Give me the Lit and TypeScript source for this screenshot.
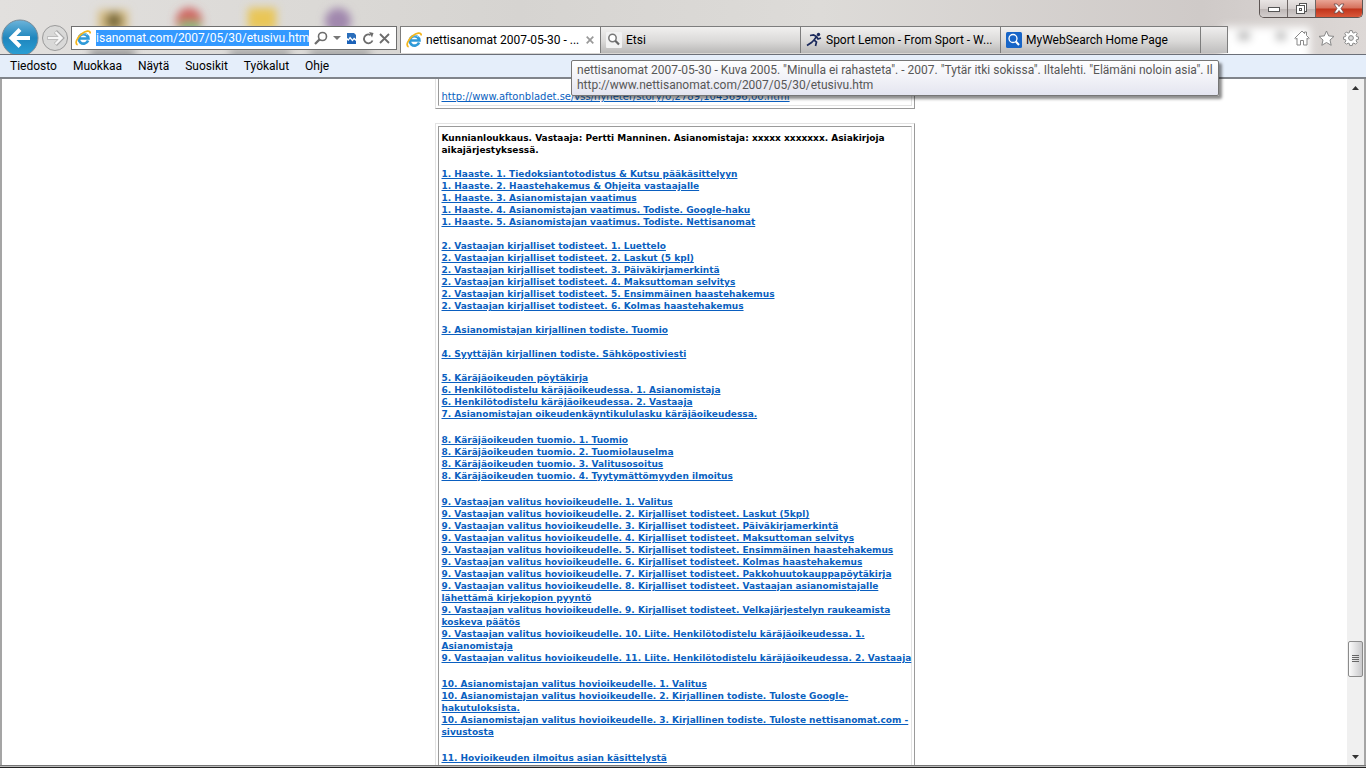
import { LitElement, html, css, svg } from "lit";
import { customElement, query } from "lit/decorators.js";

interface Group { items: string[]; wide?: boolean }

const GROUPS: Group[] = [
  { items: [
    "1. Haaste. 1. Tiedoksiantotodistus & Kutsu pääkäsittelyyn",
    "1. Haaste. 2. Haastehakemus & Ohjeita vastaajalle",
    "1. Haaste. 3. Asianomistajan vaatimus",
    "1. Haaste. 4. Asianomistajan vaatimus. Todiste. Google-haku",
    "1. Haaste. 5. Asianomistajan vaatimus. Todiste. Nettisanomat",
  ] },
  { items: [
    "2. Vastaajan kirjalliset todisteet. 1. Luettelo",
    "2. Vastaajan kirjalliset todisteet. 2. Laskut (5 kpl)",
    "2. Vastaajan kirjalliset todisteet. 3. Päiväkirjamerkintä",
    "2. Vastaajan kirjalliset todisteet. 4. Maksuttoman selvitys",
    "2. Vastaajan kirjalliset todisteet. 5. Ensimmäinen haastehakemus",
    "2. Vastaajan kirjalliset todisteet. 6. Kolmas haastehakemus",
  ] },
  { items: ["3. Asianomistajan kirjallinen todiste. Tuomio"] },
  { items: ["4. Syyttäjän kirjallinen todiste. Sähköpostiviesti"] },
  { wide: true, items: [
    "5. Käräjäoikeuden pöytäkirja",
    "6. Henkilötodistelu käräjäoikeudessa. 1. Asianomistaja",
    "6. Henkilötodistelu käräjäoikeudessa. 2. Vastaaja",
    "7. Asianomistajan oikeudenkäyntikululasku käräjäoikeudessa.",
  ] },
  { wide: true, items: [
    "8. Käräjäoikeuden tuomio. 1. Tuomio",
    "8. Käräjäoikeuden tuomio. 2. Tuomiolauselma",
    "8. Käräjäoikeuden tuomio. 3. Valitusosoitus",
    "8. Käräjäoikeuden tuomio. 4. Tyytymättömyyden ilmoitus",
  ] },
  { wide: true, items: [
    "9. Vastaajan valitus hovioikeudelle. 1. Valitus",
    "9. Vastaajan valitus hovioikeudelle. 2. Kirjalliset todisteet. Laskut (5kpl)",
    "9. Vastaajan valitus hovioikeudelle. 3. Kirjalliset todisteet. Päiväkirjamerkintä",
    "9. Vastaajan valitus hovioikeudelle. 4. Kirjalliset todisteet. Maksuttoman selvitys",
    "9. Vastaajan valitus hovioikeudelle. 5. Kirjalliset todisteet. Ensimmäinen haastehakemus",
    "9. Vastaajan valitus hovioikeudelle. 6. Kirjalliset todisteet. Kolmas haastehakemus",
    "9. Vastaajan valitus hovioikeudelle. 7. Kirjalliset todisteet. Pakkohuutokauppapöytäkirja",
    "9. Vastaajan valitus hovioikeudelle. 8. Kirjalliset todisteet. Vastaajan asianomistajalle\nlähettämä kirjekopion pyyntö",
    "9. Vastaajan valitus hovioikeudelle. 9. Kirjalliset todisteet. Velkajärjestelyn raukeamista\nkoskeva päätös",
    "9. Vastaajan valitus hovioikeudelle. 10. Liite. Henkilötodistelu käräjäoikeudessa. 1.\nAsianomistaja",
    "9. Vastaajan valitus hovioikeudelle. 11. Liite. Henkilötodistelu käräjäoikeudessa. 2. Vastaaja",
  ] },
  { wide: true, items: [
    "10. Asianomistajan valitus hovioikeudelle. 1. Valitus",
    "10. Asianomistajan valitus hovioikeudelle. 2. Kirjallinen todiste. Tuloste Google-\nhakutuloksista.",
    "10. Asianomistajan valitus hovioikeudelle. 3. Kirjallinen todiste. Tuloste nettisanomat.com -\nsivustosta",
  ] },
  { items: ["11. Hovioikeuden ilmoitus asian käsittelystä"] },
];

const MENU = ["Tiedosto", "Muokkaa", "Näytä", "Suosikit", "Työkalut", "Ohje"];

const ieLogo = () => svg`<svg class="ico" viewBox="0 0 16 16" aria-hidden="true">
  <path d="M13.100 10.600A4.800 4.800 0 1 1 13.400 8.500H5" fill="none" stroke="#2f9ad8" stroke-width="2.700"/>
  <path d="M12.300 5A5 5 0 0 0 4.300 6.500" fill="none" stroke="#8fd3f3" stroke-width="1"/>
  <path d="M2.600 14.900C-.6 13.600 2 7.400 6.500 4 10.300 1 15.300-.4 15.200 3.400" fill="none" stroke="#f3b51d" stroke-width="1.700"/>
</svg>`;

@customElement("app-root")
export class AppRoot extends LitElement {
  @query(".addr input") private address!: HTMLInputElement;

  static styles = css`
    :host {
      display: flex; flex-direction: column; height: 100vh; overflow: hidden; position: relative;
      background: #fff; color: #000; box-sizing: border-box;
      font: 12px/16px Roboto, "Noto Sans", sans-serif;
    }
    * { box-sizing: border-box; }
    button { font: inherit; color: inherit; border: 0; background: none; padding: 0; margin: 0; }
    svg { display: block; flex: none; }
    .ico { width: 16px; height: 16px; }
    .glass {
      flex: none; position: relative; overflow: hidden;
      background: linear-gradient(90deg, #e2e0de, #dcdad7 20%, #d6d4d1 38%, #dddbd8 60%, #cfcac8 88%, #ddd8d6);
      border-bottom: 1px solid #6b6f78;
    }
    .blur { position: absolute; inset: 0; width: 100%; height: 100%; }
    .title { position: relative; height: 26px; display: flex; justify-content: flex-end; align-items: flex-start; padding-right: 3px; }
    .winctl { display: flex; height: 18px; border: 1px solid #5d5553; border-top: 0; border-radius: 0 0 5px 5px; overflow: hidden; }
    .winctl button {
      width: 28px; display: flex; align-items: center; justify-content: center;
      background: linear-gradient(#e9e5e4, #d6d0cf 50%, #bdb6b5 52%, #d4cfce); border-right: 1px solid #6e6664;
    }
    .winctl .close { width: 46px; border-right: 0; background: linear-gradient(#e9a595, #d5705b 48%, #c0331a 52%, #d9583a); }
    .nav { position: relative; height: 28px; display: flex; align-items: flex-start; }
    .hist { width: 71px; height: 28px; flex: none; }
    .hist-btns { position: absolute; left: 0; top: -8px; display: flex; align-items: center; }
    .addr {
      flex: none; width: 326px; height: 24px; border: 1px solid #6f6f6f; background: #fff;
      display: flex; align-items: center; padding: 0 6px 0 3px;
    }
    .addr input {
      width: 213px; height: 16px; margin-left: 5px; padding: 0; border: 0; outline: 0; border-radius: 0;
      background: #3399ff; color: #fff; font: inherit; line-height: 16px;
    }
    .addr button { display: flex; }
    .tools { flex: 1; display: flex; align-items: center; justify-content: space-between; padding-left: 5px; }
    .tabs { display: flex; flex: 1; min-width: 0; margin-left: 3px; height: 27px; }
    .tab {
      flex: none; width: 200px; display: flex; align-items: center; gap: 4px; padding: 0 6px 0 5px; white-space: nowrap;
      border: 1px solid #7d7d7d; border-width: 1px 0 0 1px; text-align: left;
      background: linear-gradient(#f1f0ef, #dad9d8 55%, #b9b8b7);
    }
    .tab span { flex: 1; }
    .tab.active { background: #fff; }
    .newtab { width: 28px; border: 1px solid #7d7d7d; border-bottom: 0; background: linear-gradient(#efeeee, #d6d5d4 55%, #bfbebe); }
    .right { display: flex; gap: 8px; align-items: center; height: 24px; padding-right: 7px; }
    .menu { flex: none; display: flex; gap: 16px; height: 24px; padding: 0 10px; align-items: center; background: #e5eefa; border-bottom: 2px solid #80848a; }
    .body { flex: 1; min-height: 0; display: flex; border: 1px solid #a5a5a5; border-width: 0 2px 0 2px; }
    .view { flex: 1; min-width: 0; overflow: hidden; display: flex; flex-direction: column; align-items: center; gap: 14px; }
    .card { flex: none; width: 480px; padding: 2px; border: 1px solid; border-color: #e3e3e3 #9a9a9a #9a9a9a #e3e3e3; }
    .cell {
      border: 1px solid; border-color: #9a9a9a #e3e3e3 #e3e3e3 #9a9a9a; padding: 5px 3px;
      font: bold 9px/12px "DejaVu Sans", Verdana, sans-serif; white-space: pre;
    }
    .first { border-top: 0; padding-top: 0; }
    .first .cell { border-top: 0; padding: 12px 3px 2px; font-weight: 400; font-size: 10px; }
    a { color: #0a5fc0; text-decoration: underline; }
    .cell p { margin: 0 0 12px; }
    .group { list-style: none; margin: 0 0 12px; padding: 0; }
    .group.wide { margin-bottom: 14px; }
    .scroll { flex: none; width: 17px; background: #f0f0f0; display: grid; grid-template-rows: 17px 545px 36px 1fr 17px; justify-items: center; align-items: center; }
    .thumb { grid-row: 3; width: 15px; height: 36px; border: 1px solid #8b8b8b; border-radius: 2px; background: linear-gradient(90deg, #fbfbfb, #c9c9cb); display: flex; align-items: center; justify-content: center; }
    .down { grid-row: 5; }
    .edge { flex: none; height: 3px; background: linear-gradient(#777 1px, #bbb 1px 2px, #222 2px); }
    .tip {
      position: absolute; left: 571px; top: 60px; padding: 2px 5px; line-height: 15px;
      white-space: nowrap; color: #575757; border: 1px solid #767676; border-radius: 2px;
      background: linear-gradient(#fff, #e4e5f0); box-shadow: 3px 3px 3px rgba(0, 0, 0, .45);
    }
  `;

  // Keep the end of a long address in view.
  firstUpdated() {
    const toEnd = () => { this.address.scrollLeft = this.address.scrollWidth; };
    toEnd();
    requestAnimationFrame(toEnd);
  }

  render() {
    return html`
      <header class="glass">
        <svg class="blur" aria-hidden="true">
          <defs><filter id="b" x="-50%" y="-50%" width="200%" height="200%"><feGaussianBlur stdDeviation="4"/></filter></defs>
          <g filter="url(#b)">
            <rect x="98" y="10" width="30" height="24" fill="#d8bf86"/><circle cx="114" cy="21" r="9" fill="#7d6d3c"/>
            <circle cx="189" cy="21" r="13" fill="#cf6461"/><rect x="180" y="21" width="20" height="12" fill="#8db880"/>
            <rect x="248" y="8" width="28" height="22" fill="#e9c656"/>
            <circle cx="338" cy="21" r="13" fill="#a087ad"/>
            <rect x="90" y="50" width="45" height="8" fill="#888"/><rect x="230" y="50" width="60" height="8" fill="#999"/><rect x="310" y="50" width="60" height="8" fill="#999"/>
            <rect x="1222" y="27" width="88" height="40" fill="#fff"/><rect x="1238" y="32" width="12" height="8" fill="#aaa"/><rect x="1276" y="32" width="10" height="8" fill="#aaa"/>
          </g>
        </svg>
        <div class="title">
          <div class="winctl">
            <button aria-label="Pienennä"><svg width="14" height="8" viewBox="0 0 14 8"><rect x="1.500" y="2.500" width="11" height="4" fill="#fff" stroke="#555"/></svg></button>
            <button aria-label="Palauta"><svg width="13" height="13" viewBox="0 0 13 13"><g fill="#fff" stroke="#555"><rect x="4.500" y="1.500" width="7" height="8"/><rect x="1.500" y="3.500" width="8" height="8"/><rect x="4.500" y="6.500" width="2" height="2"/></g></svg></button>
            <button class="close" aria-label="Sulje"><svg width="12" height="11" viewBox="0 0 12 11"><path d="M1 1h3l2 2.500L8 1h3L8 5.500 11 10H8L6 7.500 4 10H1L4 5.500z" fill="#fff" stroke="#6b4a4a" stroke-width=".8"/></svg></button>
          </div>
        </div>
        <div class="nav">
          <div class="hist">
            <div class="hist-btns">
              <button aria-label="Takaisin"><svg width="40" height="38" viewBox="0 0 40 38">
                <defs><linearGradient id="bk" x2="0" y2="1"><stop stop-color="#6db4da"/><stop offset=".5" stop-color="#1f86bd"/><stop offset="1" stop-color="#2ba1d6"/></linearGradient></defs>
                <circle cx="20" cy="20" r="18" fill="url(#bk)" stroke="#7b8c98"/>
                <path d="M30 20H12M20 11.500 11.500 20 20 28.500" fill="none" stroke="#fff" stroke-width="4"/></svg></button>
              <button aria-label="Eteenpäin"><svg width="30" height="38" viewBox="0 0 30 38">
                <circle cx="15" cy="20" r="12.500" fill="#d9d9d8" stroke="#9a9a9a"/>
                <path d="M7.500 20H21M15.500 13.500 22 20 15.500 26.500" fill="none" stroke="#a8a8a8" stroke-width="4"/>
                <path d="M8 20H21M15.500 14 21.500 20 15.500 26" fill="none" stroke="#f6f6f6" stroke-width="2.400"/></svg></button>
            </div>
          </div>
          <div class="addr">
            ${ieLogo()}
            <input aria-label="Osoite" value="http://www.nettisanomat.com/2007/05/30/etusivu.htm">
            <div class="tools">
              <button aria-label="Haku"><svg width="14" height="14" viewBox="0 0 14 14"><circle cx="8.500" cy="5.500" r="4" fill="none" stroke="#6d6d6d" stroke-width="1.600"/><path d="M5.600 8.400 1 13" stroke="#6d6d6d" stroke-width="2.200"/></svg></button>
              <button aria-label="Näytä osoitteet"><svg width="8" height="4" viewBox="0 0 8 4"><path d="M0 0h8L4 4z" fill="#777"/></svg></button>
              <button aria-label="Yhteensopivuusnäkymä"><svg width="11" height="13" viewBox="0 0 11 13"><path d="M1 1h7l2 2v4L8 5.500 6.500 7.500 4 4.500 2.500 7 1 6z" fill="#2a6ebb"/><path d="M1 12V8l1.500 1L4 6.800 6.500 9.500 8 7.500 10 9v3z" fill="#1c62b8"/></svg></button>
              <button aria-label="Päivitä"><svg width="12" height="13" viewBox="0 0 12 13"><path d="M10.500 8.500A4.400 4.400 0 1 1 8.500 3" fill="none" stroke="#6d6d6d" stroke-width="1.800"/><path d="M7 0l4.500 1L10 5.500z" fill="#6d6d6d"/></svg></button>
              <button aria-label="Pysäytä"><svg width="11" height="11" viewBox="0 0 11 11"><path d="M1 1l9 9M10 1l-9 9" stroke="#6d6d6d" stroke-width="1.800"/></svg></button>
            </div>
          </div>
          <div class="tabs" role="tablist">
            <button class="tab active" role="tab" aria-selected="true">${ieLogo()}<span>nettisanomat 2007-05-30 - ...</span>
              <svg width="8" height="8" viewBox="0 0 8 8"><path d="M.7.700l6.600 6.600M7.300.7.700 7.300" stroke="#999" stroke-width="1.700"/></svg></button>
            <button class="tab" role="tab"><svg class="ico" viewBox="0 0 16 16"><rect width="16" height="16" rx="1" fill="#f2f2f2"/><circle cx="6.500" cy="6" r="3.700" fill="#fff" stroke="#777" stroke-width="1.500"/><path d="M9.300 8.800 13 12.500" stroke="#666" stroke-width="2.200"/></svg><span>Etsi</span></button>
            <button class="tab" role="tab"><svg class="ico" viewBox="0 0 16 16"><circle cx="12.500" cy="2.500" r="1.700" fill="#1b2a5c"/><path d="M4 3.500 7.500 3 10.500 4.500 8 8 10.500 10 9.500 14M8 8 5.500 10.500 1 13.500M10.500 4.500 12 7 15 6" fill="none" stroke="#1b2a5c" stroke-width="1.700"/></svg><span>Sport Lemon - From Sport - W...</span></button>
            <button class="tab" role="tab"><svg class="ico" viewBox="0 0 16 16"><rect width="16" height="16" rx="1.500" fill="#1765c7"/><circle cx="7" cy="6.500" r="4" fill="none" stroke="#fff" stroke-width="1.300"/><path d="M9.800 9.500 13 13" stroke="#fff" stroke-width="2"/></svg><span>MyWebSearch Home Page</span></button>
            <button class="newtab" aria-label="Uusi välilehti"></button>
          </div>
          <div class="right">
            <button aria-label="Koti"><svg width="16" height="16" viewBox="0 0 16 16"><path d="M8 1 .8 8.200l1 1L3 8.200V15h3.500v-4.500h3V15H13V8.200l1.200 1 1-1L12.500 5.500V2h-2v1.500z" fill="#fff" stroke="#888"/></svg></button>
            <button aria-label="Suosikit"><svg width="17" height="16" viewBox="0 0 17 16"><path d="M8.500 1l2.200 4.900 5.300.5-4 3.600 1.200 5.300-4.700-2.800-4.700 2.800L5 10 1 6.400l5.300-.5z" fill="#fff" stroke="#888"/></svg></button>
            <button aria-label="Työkalut"><svg width="16" height="16" viewBox="0 0 16 16"><path d="M6.800.6h2.400l.4 2 1.300.5 1.700-1.100 1.600 1.600-1.100 1.700.5 1.300 2 .4v2.200l-2 .4-.5 1.300 1.100 1.700-1.600 1.600-1.700-1.100-1.300.5-.4 2H6.800l-.4-2-1.300-.5-1.700 1.100-1.600-1.600 1.100-1.700-.5-1.300-2-.4V7l2-.4.5-1.300-1.100-1.700 1.600-1.600 1.700 1.100 1.300-.5z" fill="#fff" stroke="#888"/><circle cx="8" cy="8" r="2.400" fill="#ddd" stroke="#888"/></svg></button>
          </div>
        </div>
      </header>
      <nav class="menu">${MENU.map((m) => html`<button>${m}</button>`)}</nav>
      <div class="body">
        <main class="view">
          <section class="card first"><div class="cell"><a href="#">http://www.aftonbladet.se/vss/nyheter/story/0,2789,1045696,00.html</a></div></section>
          <section class="card"><div class="cell"><p>Kunnianloukkaus. Vastaaja: Pertti Manninen. Asianomistaja: xxxxx xxxxxxx. Asiakirjoja
aikajärjestyksessä.</p>${GROUPS.map((g) => html`<ul class="group ${g.wide ? "wide" : ""}">${g.items.map((t) => html`<li><a href="#">${t}</a></li>`)}</ul>`)}</div></section>
        </main>
        <div class="scroll" aria-hidden="true">
          <svg width="7" height="4" viewBox="0 0 7 4"><path d="M0 4h7L3.500 0z" fill="#333"/></svg>
          <div class="thumb"><svg width="7" height="8" viewBox="0 0 7 8"><path d="M0 .5h7M0 2.500h7M0 4.500h7M0 6.500h7" stroke="#666"/></svg></div>
          <svg class="down" width="7" height="4" viewBox="0 0 7 4"><path d="M0 0h7L3.500 4z" fill="#333"/></svg>
        </div>
      </div>
      <div class="edge"></div>
      <div class="tip" role="tooltip">nettisanomat 2007-05-30 - Kuva 2005. "Minulla ei rahasteta". - 2007. "Tytär itki sokissa". Iltalehti. "Elämäni noloin asia". Il<br>http://www.nettisanomat.com/2007/05/30/etusivu.htm</div>
    `;
  }
}
